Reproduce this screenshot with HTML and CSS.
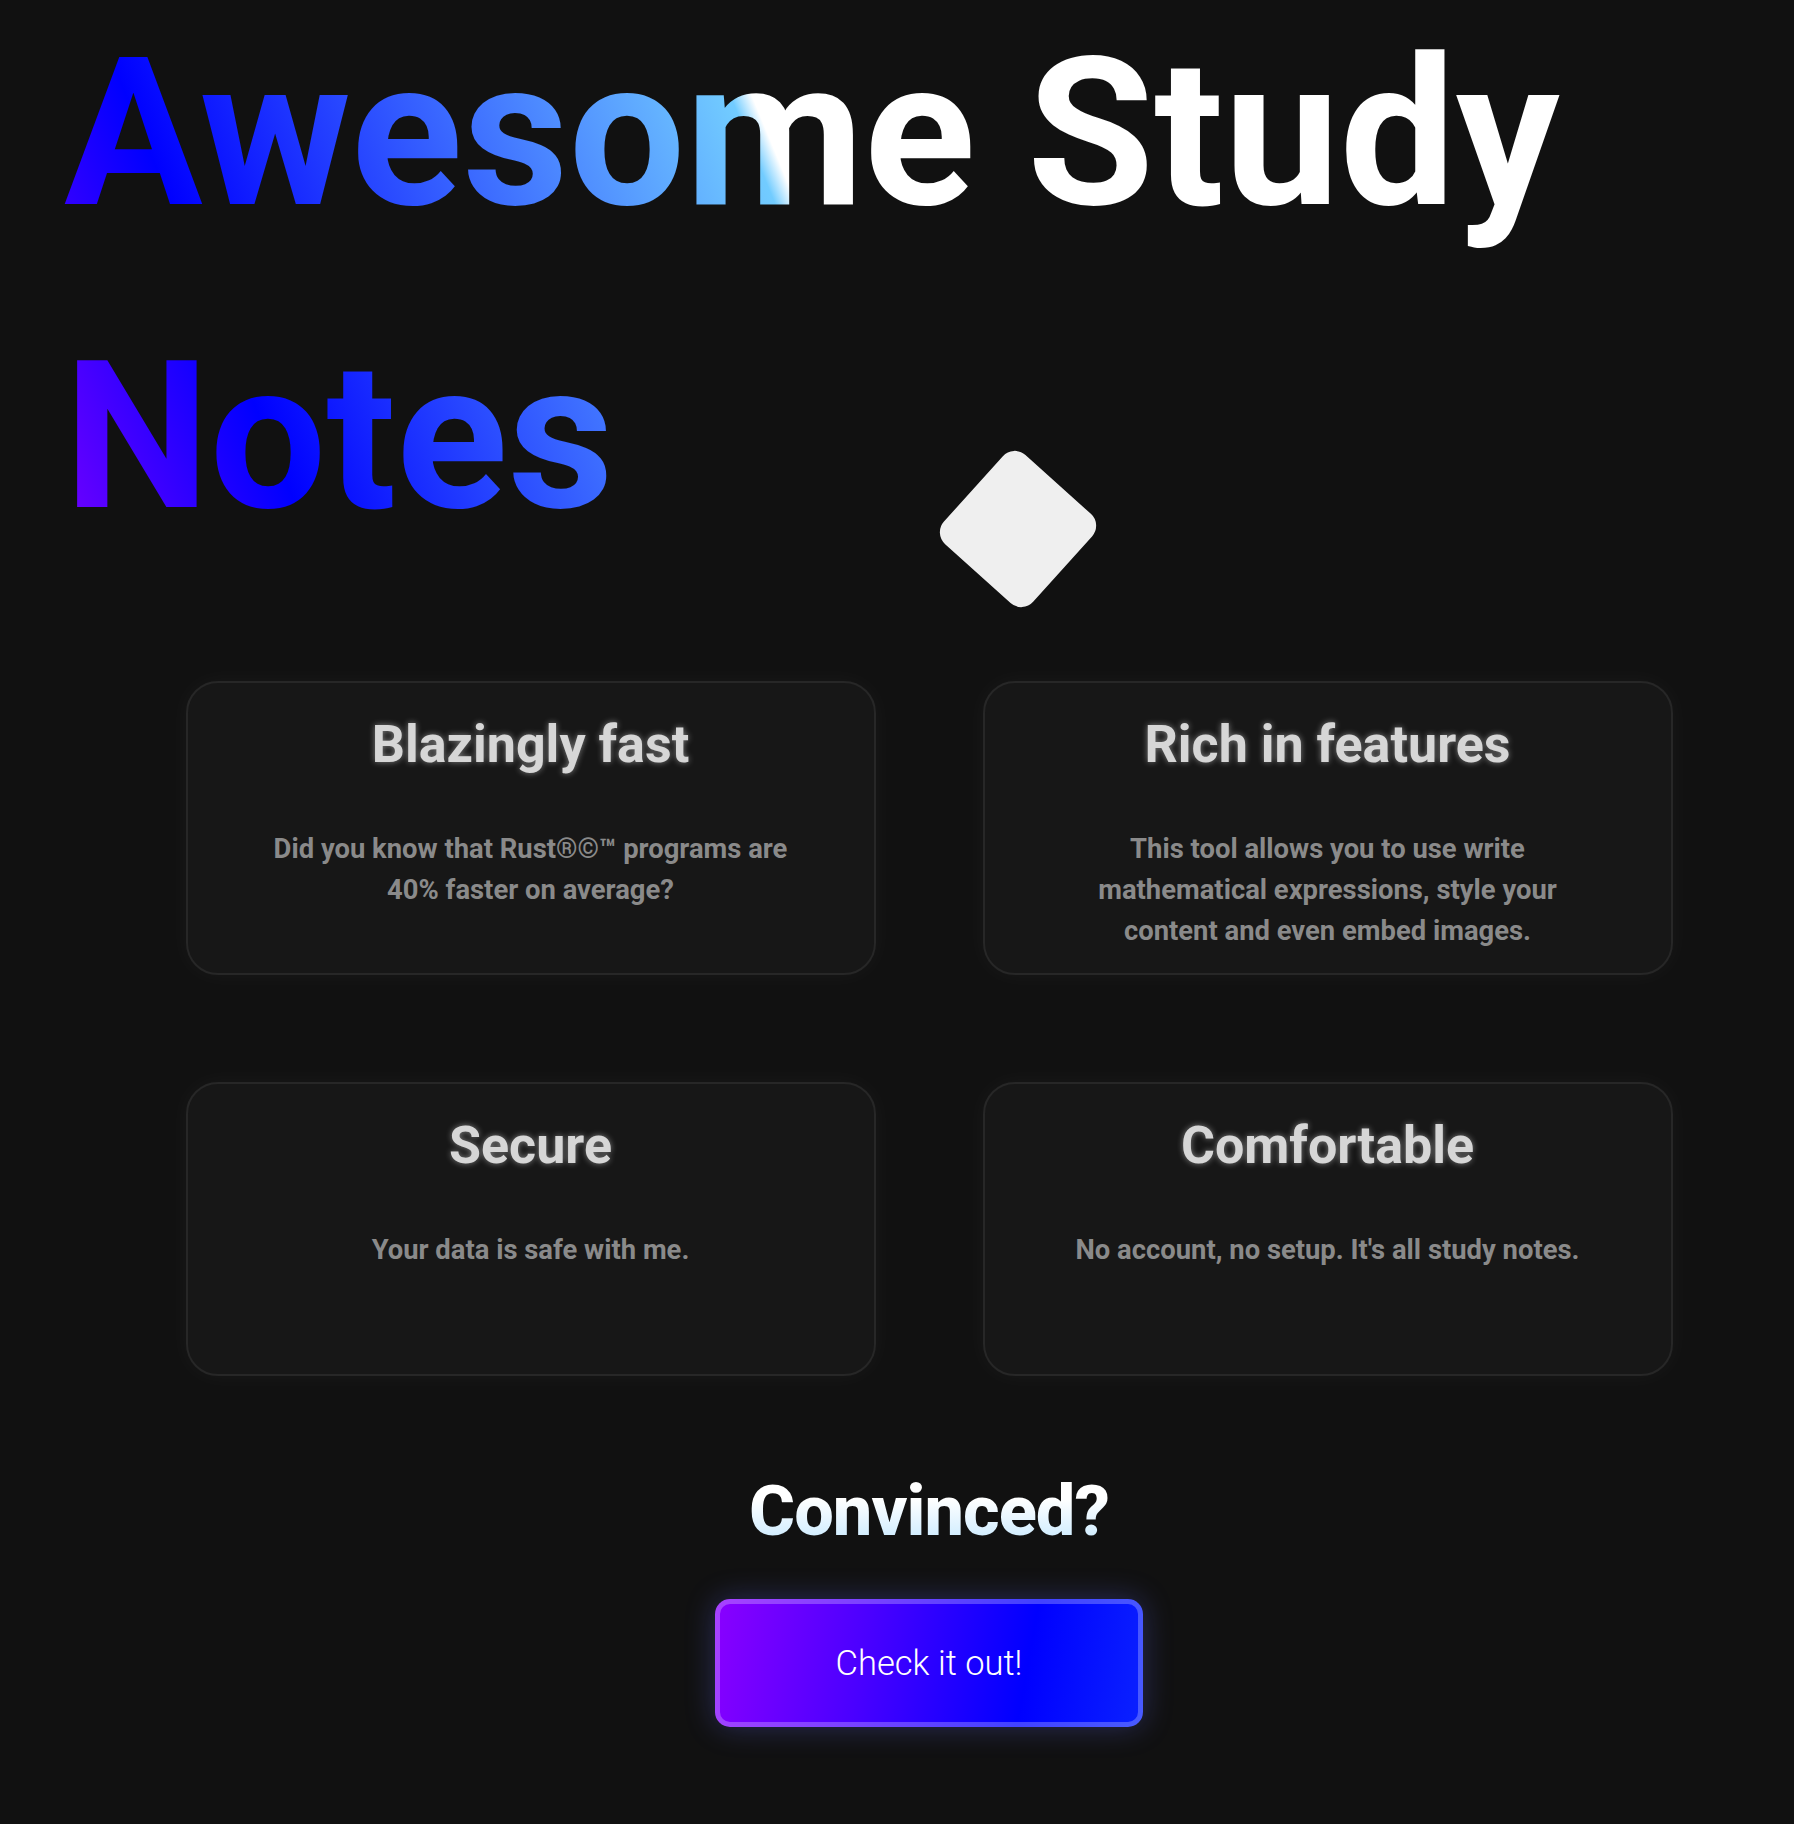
FILE: index.html
```html
<!DOCTYPE html>
<html lang="en">
<head>
<meta charset="utf-8">
<title>Awesome Study Notes</title>
<link rel="stylesheet" href="styles.css">
</head>
<body>
<main class="page">
  <section class="hero">
    <h1 class="title">Awesome Study Notes</h1>
    <div class="diamond"></div>
  </section>
  <section class="features">
    <article class="card">
      <h2 class="card-title">Blazingly fast</h2>
      <p class="card-text">Did you know that Rust®©™ programs are 40% faster on average?</p>
    </article>
    <article class="card">
      <h2 class="card-title">Rich in features</h2>
      <p class="card-text">This tool allows you to use write mathematical expressions, style your content and even embed images.</p>
    </article>
    <article class="card">
      <h2 class="card-title">Secure</h2>
      <p class="card-text">Your data is safe with me.</p>
    </article>
    <article class="card">
      <h2 class="card-title">Comfortable</h2>
      <p class="card-text">No account, no setup. It's all study notes.</p>
    </article>
  </section>
  <section class="cta">
    <h2 class="cta-title">Convinced?</h2>
    <a class="cta-button" href="#">Check it out!</a>
  </section>
</main>
</body>
</html>
```
FILE: styles.css
```css
html, body {
  margin: 0;
  padding: 0;
  background: #111111;
}

body {
  font-family: Roboto, "Noto Sans", "Liberation Sans", sans-serif;
  color: #ffffff;
}

.page {
  padding-left: 64px;
  padding-bottom: 97px;
}

.hero {
  position: relative;
}

.title {
  margin: -18px 0 0;
  font-size: 206.5px;
  font-weight: 700;
  line-height: 303px;
  background: linear-gradient(67.5deg, #7a00ff 0px, #0000ff 246px, #72ccff 804px, #ffffff 824px, #ffffff 100%);
  -webkit-background-clip: text;
  background-clip: text;
  -webkit-text-fill-color: transparent;
  color: transparent;
}

.diamond {
  position: absolute;
  left: 894px;
  top: 487px;
  width: 120px;
  height: 120px;
  border-radius: 16px;
  background: #efefef;
  transform: rotate(42deg);
}

.features {
  display: grid;
  grid-template-columns: repeat(2, 690px);
  grid-auto-rows: 294px;
  gap: 107px;
  justify-content: center;
  margin-top: 93px;
}

.card {
  box-sizing: border-box;
  border: 2px solid #272727;
  border-radius: 32px;
  background: #171717;
  box-shadow: 0 0 24px rgba(255, 255, 255, 0.04);
  padding: 32px 72px 0;
  text-align: center;
}

.card-title {
  margin: 0 0 54px;
  font-size: 52px;
  font-weight: 700;
  line-height: 60px;
  color: #d6d6d6;
  text-shadow: 0 0 6px rgba(255, 255, 255, 0.45);
}

.card-text {
  margin: 0;
  font-size: 27.4px;
  font-weight: 700;
  line-height: 41px;
  color: #8a8a8a;
}

.cta {
  margin-top: 94px;
  display: flex;
  flex-direction: column;
  align-items: center;
}

.cta-title {
  margin: 0;
  font-size: 70.4px;
  font-weight: 800;
  letter-spacing: -1px;
  line-height: 82px;
  background: linear-gradient(to bottom, #ffffff 35%, #bfe6ff 100%);
  -webkit-background-clip: text;
  background-clip: text;
  -webkit-text-fill-color: transparent;
  color: transparent;
}

.cta-button {
  margin-top: 47px;
  box-sizing: border-box;
  width: 428px;
  height: 128px;
  display: flex;
  align-items: center;
  justify-content: center;
  border: 5px solid rgba(255, 255, 255, 0.26);
  border-radius: 15px;
  background: linear-gradient(100deg, #8a00ff 0%, #4a00ff 35%, #0000ff 72%, #0a22ff 100%);
  background-origin: border-box;
  box-shadow: 0 0 30px rgba(100, 110, 255, 0.3);
  color: #ffffff;
  font-size: 34.5px;
  font-weight: 300;
  text-decoration: none;
}
```
